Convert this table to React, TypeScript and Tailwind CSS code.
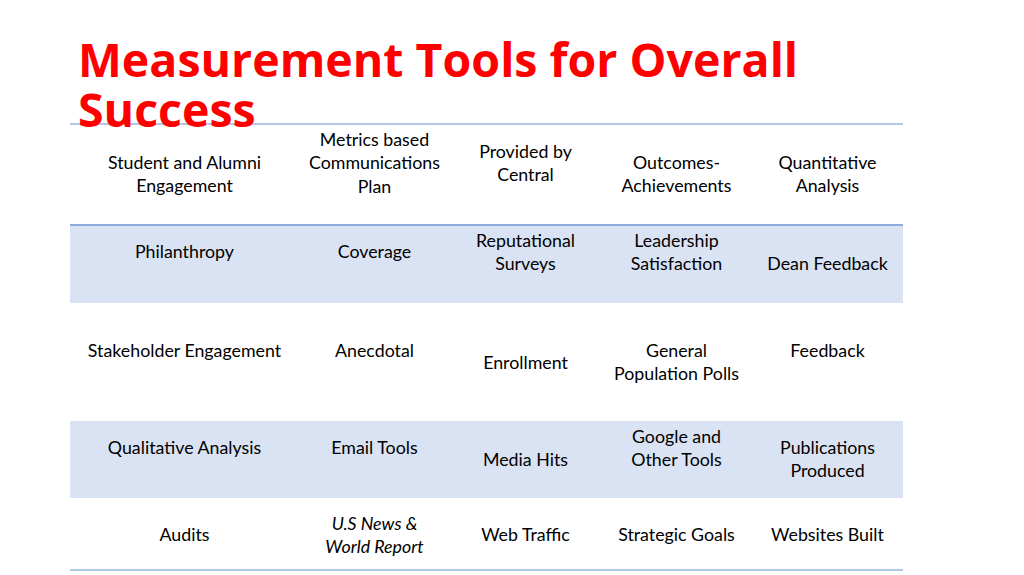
type Cell = { text: string[]; pt: string; italic?: boolean };
type Row = { cells: Cell[]; height: string; bg: string; border: string };

const rows: Row[] = [
  {
    height: 'h-[101px]',
    bg: 'bg-white',
    border: 'border-b-2 border-[#8eaadb]',
    cells: [
      { text: ['Student and Alumni', 'Engagement'], pt: 'pt-[26px]' },
      { text: ['Metrics based', 'Communications', 'Plan'], pt: 'pt-[3px]' },
      { text: ['Provided by', 'Central'], pt: 'pt-[15px]' },
      { text: ['Outcomes-', 'Achievements'], pt: 'pt-[26px]' },
      { text: ['Quantitative', 'Analysis'], pt: 'pt-[26px]' },
    ],
  },
  {
    height: 'h-[77px]',
    bg: 'bg-[#dae3f3]',
    border: '',
    cells: [
      { text: ['Philanthropy'], pt: 'pt-[14px]' },
      { text: ['Coverage'], pt: 'pt-[14px]' },
      { text: ['Reputational', 'Surveys'], pt: 'pt-[3px]' },
      { text: ['Leadership', 'Satisfaction'], pt: 'pt-[3px]' },
      { text: ['Dean Feedback'], pt: 'pt-[26px]' },
    ],
  },
  {
    height: 'h-[118px]',
    bg: 'bg-white',
    border: '',
    cells: [
      { text: ['Stakeholder Engagement'], pt: 'pt-[36px]' },
      { text: ['Anecdotal'], pt: 'pt-[36px]' },
      { text: ['Enrollment'], pt: 'pt-[48px]' },
      { text: ['General', 'Population Polls'], pt: 'pt-[36px]' },
      { text: ['Feedback'], pt: 'pt-[36px]' },
    ],
  },
  {
    height: 'h-[77px]',
    bg: 'bg-[#dae3f3]',
    border: '',
    cells: [
      { text: ['Qualitative Analysis'], pt: 'pt-[15px]' },
      { text: ['Email Tools'], pt: 'pt-[15px]' },
      { text: ['Media Hits'], pt: 'pt-[27px]' },
      { text: ['Google and', 'Other Tools'], pt: 'pt-[4px]' },
      { text: ['Publications', 'Produced'], pt: 'pt-[15px]' },
    ],
  },
  {
    height: 'h-[73px]',
    bg: 'bg-white',
    border: 'border-b-2 border-[#b4c7e7]',
    cells: [
      { text: ['Audits'], pt: 'pt-[25px]' },
      { text: ['U.S News &', 'World Report'], pt: 'pt-[14px]', italic: true },
      { text: ['Web Traffic'], pt: 'pt-[25px]' },
      { text: ['Strategic Goals'], pt: 'pt-[25px]' },
      { text: ['Websites Built'], pt: 'pt-[25px]' },
    ],
  },
];

export default function App() {
  return (
    <div className="w-[1024px] h-[575px] bg-white overflow-hidden relative">
      <h1
        className="absolute left-[78px] top-[34px] text-[46.5px] leading-[50px] font-bold text-[#ff0000] z-10 whitespace-nowrap"
        style={{ fontFamily: '"Open Sans", "Noto Sans", sans-serif' }}
      >
        Measurement Tools for Overall
        <br />
        Success
      </h1>
      <div
        className="ml-[70px] mt-[123px] w-[833px] border-t-2 border-[#b4c7e7] text-[17.8px] leading-[23.3px] text-black"
        style={{ fontFamily: 'Lato, "Liberation Sans", sans-serif' }}
      >
        {rows.map((row, i) => (
          <div key={i} className={`grid grid-cols-[229px_151px_151px_151px_151px] ${row.height} ${row.bg} ${row.border}`}>
            {row.cells.map((c, j) => (
              <div key={j} className={`text-center ${c.pt} ${c.italic ? 'italic' : ''}`}>
                {c.text.map((t) => (
                  <div key={t}>{t}</div>
                ))}
              </div>
            ))}
          </div>
        ))}
      </div>
    </div>
  );
}
